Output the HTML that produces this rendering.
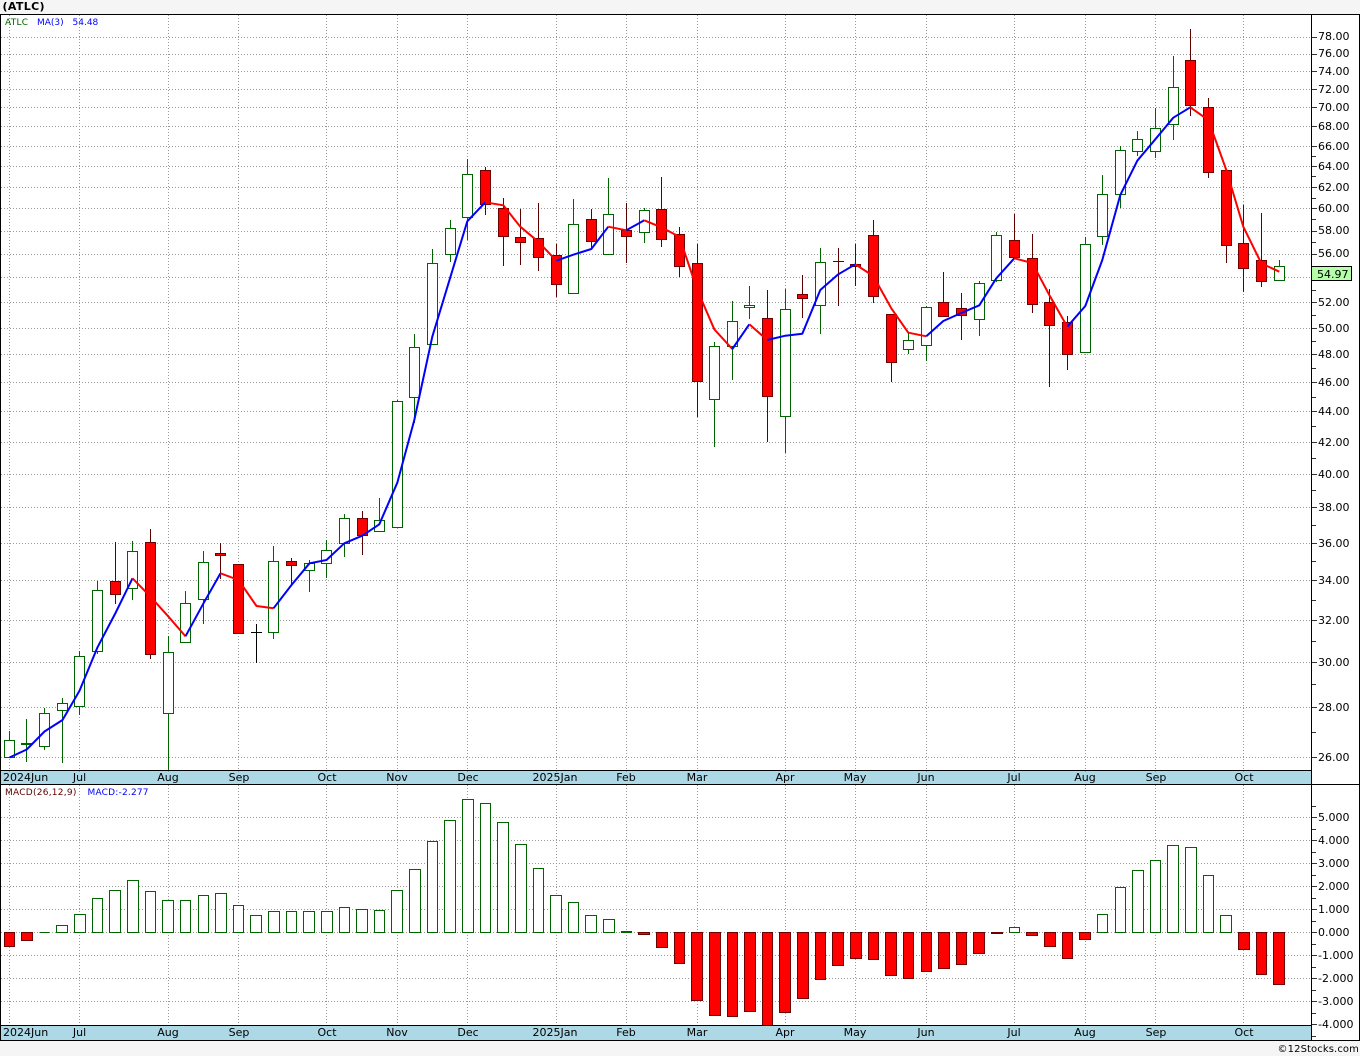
<!DOCTYPE html>
<html><head><meta charset="utf-8"><title>ATLC</title>
<style>
html,body{margin:0;padding:0;background:#f5f5f5}
svg{display:block}
text{font-family:"DejaVu Sans","Liberation Sans",sans-serif;font-size:11px;fill:#000}
.s{font-size:9px}
.m{text-anchor:middle}
</style></head><body>
<svg width="1360" height="1056" viewBox="0 0 1360 1056" xmlns="http://www.w3.org/2000/svg">
<rect width="1360" height="1056" fill="#f5f5f5"/>
<rect x="0" y="14" width="1360" height="1027" fill="#fff"/>
<rect x="1" y="770" width="1310" height="14" fill="#add8e6"/>
<rect x="1" y="1025" width="1310" height="15" fill="#add8e6"/>
<g shape-rendering="crispEdges">
<path fill="none" stroke="#999" stroke-dasharray="1 2" d="M1 37.5H1311M1 54.5H1311M1 71.5H1311M1 89.5H1311M1 107.5H1311M1 126.5H1311M1 146.5H1311M1 166.5H1311M1 187.5H1311M1 208.5H1311M1 231.5H1311M1 254.5H1311M1 277.5H1311M1 302.5H1311M1 328.5H1311M1 354.5H1311M1 382.5H1311M1 411.5H1311M1 442.5H1311M1 474.5H1311M1 507.5H1311M1 543.5H1311M1 580.5H1311M1 620.5H1311M1 662.5H1311M1 707.5H1311M1 757.5H1311M1 817.5H1311M1 840.5H1311M1 863.5H1311M1 886.5H1311M1 909.5H1311M1 932.5H1311M1 955.5H1311M1 978.5H1311M1 1001.5H1311"/>
<path fill="none" stroke="#999" stroke-dasharray="1 2" d="M9.5 15V773M79.5 15V773M168.5 15V773M238.5 15V773M326.5 15V773M397.5 15V773M467.5 15V773M556.5 15V773M626.5 15V773M697.5 15V773M785.5 15V773M855.5 15V773M926.5 15V773M1014.5 15V773M1085.5 15V773M1155.5 15V773M1243.5 15V773M9.5 785V1028M79.5 785V1028M168.5 785V1028M238.5 785V1028M326.5 785V1028M397.5 785V1028M467.5 785V1028M556.5 785V1028M626.5 785V1028M697.5 785V1028M785.5 785V1028M855.5 785V1028M926.5 785V1028M1014.5 785V1028M1085.5 785V1028M1155.5 785V1028M1243.5 785V1028"/>
<!-- candle wicks -->
<path fill="none" stroke="#006400" d="M9.5 731V758M26.5 719V762M44.5 708V750M62.5 698V763M79.5 651V715M97.5 581V654M132.5 541V600M168.5 636V770M185.5 591V642M203.5 551V624M273.5 546V639M309.5 560V592M326.5 540V578M344.5 514V557M379.5 498V531M397.5 400V527M414.5 334V423M432.5 249V344M450.5 220V262M467.5 159V240M573.5 199V293M608.5 178V254M644.5 208V243M714.5 342V447M732.5 301V380M749.5 286V319M785.5 289V453M820.5 248V334M908.5 333V354M926.5 306V361M979.5 281V336M996.5 232V282M1085.5 237V352M1102.5 175V245M1120.5 146V208M1137.5 131V156M1155.5 108V158M1173.5 56V140M1279.5 260V280"/>
<path fill="none" stroke="#5c0000" d="M115.5 542V604M150.5 529V659M220.5 543V579M291.5 558V585M362.5 511V555M485.5 167V215M503.5 198V266M520.5 209V265M538.5 203V271M556.5 244V297M591.5 209V249M626.5 203V263M661.5 177V247M679.5 227V277M697.5 244V417M767.5 290V442M802.5 275V318M838.5 248V306M833 261.5H844M855.5 244V286M873.5 220V303M891.5 314V382M943.5 272V317M961.5 293V340M1014.5 214V257M1032.5 234V313M1049.5 289V387M1067.5 316V370M1190.5 29V116M1208.5 98V178M1226.5 170V263M1243.5 205V292M1261.5 213V287"/>
<path fill="none" stroke="#000" d="M256.5 624V663M251 632.5H262"/>
<!-- candle bodies -->
<path fill="#fff" stroke="#006400" d="M4.5 740.5h10v17h-10zM21.5 743.5h10v1h-10zM39.5 713.5h10v33h-10zM57.5 703.5h10v7h-10zM74.5 656.5h10v50h-10zM92.5 590.5h10v61h-10zM127.5 551.5h10v37h-10zM163.5 652.5h10v61h-10zM180.5 603.5h10v39h-10zM198.5 562.5h10v37h-10zM268.5 561.5h10v71h-10zM304.5 563.5h10v7h-10zM321.5 550.5h10v13h-10zM339.5 518.5h10v25h-10zM374.5 520.5h10v11h-10zM392.5 401.5h10v126h-10zM409.5 347.5h10v50h-10zM427.5 263.5h10v81h-10zM445.5 228.5h10v26h-10zM462.5 174.5h10v43h-10zM568.5 224.5h10v69h-10zM603.5 214.5h10v40h-10zM639.5 210.5h10v22h-10zM709.5 346.5h10v53h-10zM727.5 321.5h10v25h-10zM744.5 305.5h10v2h-10zM780.5 309.5h10v107h-10zM815.5 262.5h10v43h-10zM903.5 340.5h10v9h-10zM921.5 307.5h10v38h-10zM974.5 283.5h10v36h-10zM991.5 235.5h10v45h-10zM1080.5 244.5h10v108h-10zM1097.5 194.5h10v42h-10zM1115.5 150.5h10v44h-10zM1132.5 139.5h10v12h-10zM1150.5 128.5h10v23h-10zM1168.5 87.5h10v37h-10zM1274.5 266.5h10v14h-10z"/>
<path fill="#f00" stroke="#6e0000" d="M110.5 581.5h10v13h-10zM145.5 542.5h10v112h-10zM215.5 553.5h10v2h-10zM233.5 564.5h10v69h-10zM286.5 561.5h10v4h-10zM357.5 518.5h10v17h-10zM480.5 170.5h10v34h-10zM498.5 208.5h10v28h-10zM515.5 237.5h10v5h-10zM533.5 238.5h10v19h-10zM551.5 255.5h10v29h-10zM586.5 219.5h10v22h-10zM621.5 230.5h10v6h-10zM656.5 209.5h10v30h-10zM674.5 234.5h10v32h-10zM692.5 263.5h10v118h-10zM762.5 318.5h10v78h-10zM797.5 294.5h10v4h-10zM850.5 264.5h10v2h-10zM868.5 235.5h10v61h-10zM886.5 314.5h10v48h-10zM938.5 302.5h10v14h-10zM956.5 308.5h10v7h-10zM1009.5 240.5h10v17h-10zM1027.5 258.5h10v46h-10zM1044.5 302.5h10v23h-10zM1062.5 322.5h10v32h-10zM1185.5 60.5h10v45h-10zM1203.5 107.5h10v65h-10zM1221.5 170.5h10v75h-10zM1238.5 243.5h10v25h-10zM1256.5 260.5h10v21h-10z"/>
<!-- MACD bars -->
<path fill="#fff" stroke="#006400" d="M39.5 932.5H49.5M56.5 932.5V925.5H67.5V932.5zM74.5 932.5V914.5H85.5V932.5zM92.5 932.5V898.5H102.5V932.5zM109.5 932.5V890.5H120.5V932.5zM127.5 932.5V880.5H138.5V932.5zM145.5 932.5V891.5H155.5V932.5zM162.5 932.5V900.5H173.5V932.5zM180.5 932.5V900.5H190.5V932.5zM198.5 932.5V895.5H208.5V932.5zM215.5 932.5V893.5H226.5V932.5zM233.5 932.5V905.5H243.5V932.5zM250.5 932.5V915.5H261.5V932.5zM268.5 932.5V911.5H279.5V932.5zM286.5 932.5V911.5H296.5V932.5zM303.5 932.5V911.5H314.5V932.5zM321.5 932.5V911.5H332.5V932.5zM339.5 932.5V907.5H349.5V932.5zM356.5 932.5V909.5H367.5V932.5zM374.5 932.5V910.5H384.5V932.5zM391.5 932.5V890.5H402.5V932.5zM409.5 932.5V869.5H420.5V932.5zM427.5 932.5V841.5H437.5V932.5zM444.5 932.5V820.5H455.5V932.5zM462.5 932.5V799.5H473.5V932.5zM480.5 932.5V803.5H490.5V932.5zM497.5 932.5V822.5H508.5V932.5zM515.5 932.5V844.5H526.5V932.5zM533.5 932.5V868.5H543.5V932.5zM550.5 932.5V895.5H561.5V932.5zM568.5 932.5V902.5H578.5V932.5zM585.5 932.5V915.5H596.5V932.5zM603.5 932.5V919.5H614.5V932.5zM621.5 932.5V931.5H631.5V932.5zM1009.5 932.5V927.5H1019.5V932.5zM1097.5 932.5V914.5H1107.5V932.5zM1115.5 932.5V887.5H1125.5V932.5zM1132.5 932.5V870.5H1143.5V932.5zM1150.5 932.5V860.5H1160.5V932.5zM1167.5 932.5V845.5H1178.5V932.5zM1185.5 932.5V847.5H1196.5V932.5zM1203.5 932.5V875.5H1213.5V932.5zM1220.5 932.5V915.5H1231.5V932.5z"/>
<path fill="#f00" stroke="#6e0000" d="M4.5 932.5V946.5H14.5V932.5zM21.5 932.5V940.5H32.5V932.5zM638.5 932.5V934.5H649.5V932.5zM656.5 932.5V947.5H667.5V932.5zM674.5 932.5V963.5H684.5V932.5zM691.5 932.5V1000.5H702.5V932.5zM709.5 932.5V1015.5H720.5V932.5zM727.5 932.5V1016.5H737.5V932.5zM744.5 932.5V1011.5H755.5V932.5zM762.5 932.5V1025.5H772.5V932.5zM779.5 932.5V1012.5H790.5V932.5zM797.5 932.5V998.5H808.5V932.5zM815.5 932.5V979.5H825.5V932.5zM832.5 932.5V965.5H843.5V932.5zM850.5 932.5V958.5H861.5V932.5zM868.5 932.5V959.5H878.5V932.5zM885.5 932.5V975.5H896.5V932.5zM903.5 932.5V978.5H913.5V932.5zM921.5 932.5V971.5H931.5V932.5zM938.5 932.5V968.5H949.5V932.5zM956.5 932.5V964.5H966.5V932.5zM973.5 932.5V953.5H984.5V932.5zM991.5 932.5V933.5H1002.5V932.5zM1026.5 932.5V935.5H1037.5V932.5zM1044.5 932.5V946.5H1055.5V932.5zM1062.5 932.5V958.5H1072.5V932.5zM1079.5 932.5V939.5H1090.5V932.5zM1238.5 932.5V949.5H1249.5V932.5zM1256.5 932.5V974.5H1266.5V932.5zM1273.5 932.5V984.5H1284.5V932.5z"/>
</g>
<!-- moving average -->
<g fill="none" stroke-width="2" stroke-linejoin="round">
<polyline stroke="#00f" points="9.5,757.5 26.7,749.5 44.5,731.5 62.5,720 79.5,690.7 97.5,647.3 115.5,613 132.5,578.3"/>
<polyline stroke="#f00" points="132.5,578.3 150.5,596.7 168.5,616.7 185.5,636.3"/>
<polyline stroke="#00f" points="185.5,636.3 203.5,603.3 220.5,573.3"/>
<polyline stroke="#f00" points="220.5,573.3 238.5,580 256.5,606 273.5,608.3"/>
<polyline stroke="#00f" points="273.5,608.3 291.5,585 309.5,563.3 326.5,560 344.3,543.3 362.3,535.7 379.3,524.3 397.3,482.7 414.3,420 432.3,336.7 450.3,277.3 467.3,221.3 485.3,202.3"/>
<polyline stroke="#f00" points="485.3,202.3 503.3,205.3 520.3,226.7 538.3,241.7 556.3,260.7"/>
<polyline stroke="#00f" points="556.3,260.7 573.3,254.7 591.3,249 608.3,226.7"/>
<polyline stroke="#f00" points="608.3,226.7 626.3,230.3"/>
<polyline stroke="#00f" points="626.3,230.3 644.3,220.3"/>
<polyline stroke="#f00" points="644.3,220.3 661.3,227.3 679.3,236.7 697.3,290 714.3,329.3 732.3,349"/>
<polyline stroke="#00f" points="732.3,349 749.3,324.3"/>
<polyline stroke="#f00" points="749.3,324.3 767.3,340"/>
<polyline stroke="#00f" points="767.3,340 785.3,335.7 802.3,333.7 820.3,290 838.3,274.3 855.3,264.3"/>
<polyline stroke="#f00" points="855.3,264.3 873.3,276 891.3,308.3 908.3,332.7 926.3,336.3"/>
<polyline stroke="#00f" points="926.3,336.3 943.3,321 961.3,313 979.3,305.3 996.3,278.3 1014.3,258.3"/>
<polyline stroke="#f00" points="1014.3,258.3 1032.3,263 1049.3,295 1067.3,326.7"/>
<polyline stroke="#00f" points="1067.3,326.7 1085.3,306 1102.3,260 1120.3,195 1137.3,160.7 1155.3,139.3 1173.3,117.7 1190.3,107.3"/>
<polyline stroke="#f00" points="1190.3,107.3 1208.3,120 1226.3,170 1243.3,226.7 1261.3,263.3 1279.3,271.7"/>
</g>
<!-- frame -->
<g shape-rendering="crispEdges">
<path fill="none" stroke="#000" d="M0 14.5H1360M0 770.5H1311M0 784.5H1360M0 1025.5H1311M0 1040.5H1360M.5 14V1041M1311.5 14V1041M1359.5 14V1041"/>
<path fill="none" stroke="#333" d="M1312 37.5h5M1312 54.5h5M1312 71.5h5M1312 89.5h5M1312 107.5h5M1312 126.5h5M1312 146.5h5M1312 166.5h5M1312 187.5h5M1312 208.5h5M1312 231.5h5M1312 254.5h5M1312 302.5h5M1312 328.5h5M1312 354.5h5M1312 382.5h5M1312 411.5h5M1312 442.5h5M1312 474.5h5M1312 507.5h5M1312 543.5h5M1312 580.5h5M1312 620.5h5M1312 662.5h5M1312 707.5h5M1312 757.5h5M1312 156.5h4M1312 176.5h4M1312 198.5h4M1312 219.5h4M1312 242.5h4M1312 290.5h4M1312 315.5h4M1312 341.5h4M1312 368.5h4M1312 397.5h4M1312 426.5h4M1312 458.5h4M1312 490.5h4M1312 525.5h4M1312 561.5h4M1312 600.5h4M1312 641.5h4M1312 684.5h4M1312 732.5h4M1312 817.5h5M1312 840.5h5M1312 863.5h5M1312 886.5h5M1312 909.5h5M1312 932.5h5M1312 955.5h5M1312 978.5h5M1312 1001.5h5M1312 1024.5h5M1312 806.5h4M1312 829.5h4M1312 852.5h4M1312 875.5h4M1312 898.5h4M1312 921.5h4M1312 944.5h4M1312 967.5h4M1312 990.5h4M1312 1013.5h4M1312 1036.5h4"/>
<rect x="1311.5" y="266.5" width="40" height="14" fill="#b4ffa8" stroke="#000"/>
</g>
<!-- text -->
<text x="2.5" y="10" style="font-weight:bold;letter-spacing:.35px">(ATLC)</text>
<text class="s" x="5" y="25" style="fill:#006400;letter-spacing:.25px">ATLC</text>
<text class="s" x="37" y="25" style="fill:#00f">MA(3)</text>
<text class="s" x="72.5" y="25" style="fill:#00f">54.48</text>
<text class="s" x="5" y="795" style="fill:#600000;letter-spacing:.25px">MACD(26,12,9)</text>
<text class="s" x="87.5" y="795" style="fill:#00f;letter-spacing:.2px">MACD:-2.277</text>
<g>
<text x="1318" y="40">78.00</text><text x="1318" y="57">76.00</text><text x="1318" y="75">74.00</text><text x="1318" y="93">72.00</text><text x="1318" y="111">70.00</text><text x="1318" y="130">68.00</text><text x="1318" y="150">66.00</text><text x="1318" y="170">64.00</text><text x="1318" y="191">62.00</text><text x="1318" y="212">60.00</text><text x="1318" y="234">58.00</text><text x="1318" y="257">56.00</text><text x="1317" y="278">54.97</text><text x="1318" y="306">52.00</text><text x="1318" y="332">50.00</text><text x="1318" y="358">48.00</text><text x="1318" y="386">46.00</text><text x="1318" y="415">44.00</text><text x="1318" y="446">42.00</text><text x="1318" y="478">40.00</text><text x="1318" y="511">38.00</text><text x="1318" y="547">36.00</text><text x="1318" y="584">34.00</text><text x="1318" y="624">32.00</text><text x="1318" y="666">30.00</text><text x="1318" y="711">28.00</text><text x="1318" y="761">26.00</text>
<text x="1318" y="821">5.000</text><text x="1318" y="844">4.000</text><text x="1318" y="867">3.000</text><text x="1318" y="890">2.000</text><text x="1318" y="913">1.000</text><text x="1318" y="936">0.000</text><text x="1318" y="959">-1.000</text><text x="1318" y="982">-2.000</text><text x="1318" y="1005">-3.000</text><text x="1318" y="1028">-4.000</text>
</g>
<g>
<text x="3" y="781">2024Jun</text><text class="m" x="79.5" y="781">Jul</text><text class="m" x="168" y="781">Aug</text><text class="m" x="239" y="781">Sep</text><text class="m" x="327" y="781">Oct</text><text class="m" x="397" y="781">Nov</text><text class="m" x="468" y="781">Dec</text><text class="m" x="555" y="781">2025Jan</text><text class="m" x="626" y="781">Feb</text><text class="m" x="697" y="781">Mar</text><text class="m" x="785" y="781">Apr</text><text class="m" x="855" y="781">May</text><text class="m" x="926" y="781">Jun</text><text class="m" x="1014" y="781">Jul</text><text class="m" x="1085" y="781">Aug</text><text class="m" x="1156" y="781">Sep</text><text class="m" x="1244" y="781">Oct</text>
<text x="3" y="1036">2024Jun</text><text class="m" x="79.5" y="1036">Jul</text><text class="m" x="168" y="1036">Aug</text><text class="m" x="239" y="1036">Sep</text><text class="m" x="327" y="1036">Oct</text><text class="m" x="397" y="1036">Nov</text><text class="m" x="468" y="1036">Dec</text><text class="m" x="555" y="1036">2025Jan</text><text class="m" x="626" y="1036">Feb</text><text class="m" x="697" y="1036">Mar</text><text class="m" x="785" y="1036">Apr</text><text class="m" x="855" y="1036">May</text><text class="m" x="926" y="1036">Jun</text><text class="m" x="1014" y="1036">Jul</text><text class="m" x="1085" y="1036">Aug</text><text class="m" x="1156" y="1036">Sep</text><text class="m" x="1244" y="1036">Oct</text>
</g>
<text x="1359" y="1052" style="font-size:10px;text-anchor:end;letter-spacing:.1px">©12Stocks.com</text>
</svg>
</body></html>
